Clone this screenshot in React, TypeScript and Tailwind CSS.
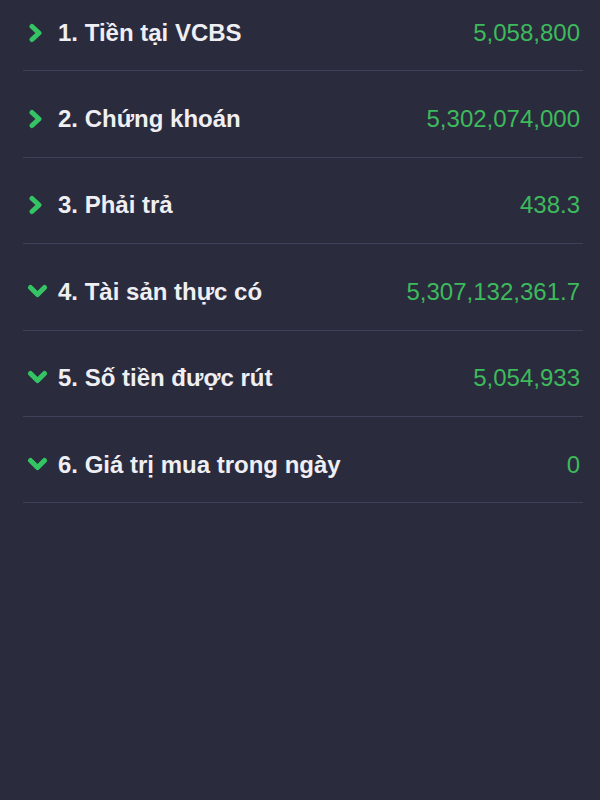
import React from "react";

type Row = { label: string; value: string; open: boolean };

const rows: Row[] = [
  { label: "1. Tiền tại VCBS", value: "5,058,800", open: false },
  { label: "2. Chứng khoán", value: "5,302,074,000", open: false },
  { label: "3. Phải trả", value: "438.3", open: false },
  { label: "4. Tài sản thực có", value: "5,307,132,361.7", open: true },
  { label: "5. Số tiền được rút", value: "5,054,933", open: true },
  { label: "6. Giá trị mua trong ngày", value: "0", open: true },
];

function Chevron({ open }: { open: boolean }) {
  if (open) {
    return (
      <svg width="22" height="16" viewBox="0 0 22 16" className="shrink-0">
        <path
          d="M3.5 3.5 L10.5 10.5 L17.5 3.5"
          fill="none"
          stroke="#34c463"
          strokeWidth="5"
          strokeLinejoin="round"
          strokeLinecap="round"
        />
      </svg>
    );
  }
  return (
    <svg width="22" height="20" viewBox="0 0 22 20" className="shrink-0">
      <path
        d="M5 3.5 L12 10 L5 16.5"
        fill="none"
        stroke="#34c463"
        strokeWidth="5"
        strokeLinejoin="round"
        strokeLinecap="round"
      />
    </svg>
  );
}

export default function App() {
  return (
    <div
      className="w-[600px] h-[800px] overflow-hidden bg-[#2b2b3e]"
      style={{ fontFamily: '"Liberation Sans", Arial, sans-serif' }}
    >
      <div className="-mt-[15px] px-[23px] pr-[17px]">
        {rows.map((r) => (
          <div
            key={r.label}
            className="h-[86.4px] pt-[10px] border-b border-[#40405a]"
          >
            <div className="flex h-full items-center pl-[4px] pr-[3px]">
              <div className="w-[31px]">
                <Chevron open={r.open} />
              </div>
              <span className="flex-1 text-[24px] font-bold text-[#efeff3]">
                {r.label}
              </span>
              <span className="text-[24px] text-[#3dba5c]">{r.value}</span>
            </div>
          </div>
        ))}
      </div>
    </div>
  );
}
